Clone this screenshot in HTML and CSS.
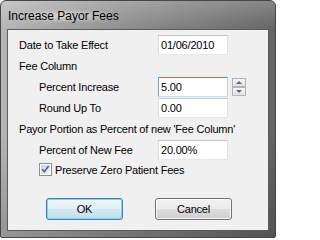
FILE: index.html
```html
<!DOCTYPE html>
<html>
<head>
<meta charset="utf-8">
<link rel="stylesheet" href="styles.css">
</head>
<body>
<div class="window">
  <div class="titlebar"><span class="title">Increase Payor Fees</span></div>
  <div class="client">
    <div class="row row-date">
      <span class="label">Date to Take Effect</span>
      <div class="field">01/06/2010</div>
    </div>
    <div class="heading heading-fee">Fee Column</div>
    <div class="row row-indent row-percent">
      <span class="label">Percent Increase</span>
      <div class="field field-focus">5.00</div>
      <svg class="spin" width="14" height="18" viewBox="0 0 14 18">
        <defs>
          <linearGradient id="sg" x1="0" y1="0" x2="0" y2="1">
            <stop offset="0" stop-color="#f6f6f6"/>
            <stop offset="1" stop-color="#e2e2e2"/>
          </linearGradient>
        </defs>
        <rect x="0.5" y="0.5" width="13" height="8" fill="url(#sg)" stroke="#b4b4b4"/>
        <rect x="0.5" y="9.5" width="13" height="8" fill="url(#sg)" stroke="#b4b4b4"/>
        <polygon points="4,6 10,6 7,3" fill="#4d6a99"/>
        <polygon points="4,12 10,12 7,15" fill="#4d6a99"/>
      </svg>
    </div>
    <div class="row row-indent row-round">
      <span class="label">Round Up To</span>
      <div class="field">0.00</div>
    </div>
    <div class="heading heading-payor">Payor Portion as Percent of new 'Fee Column'</div>
    <div class="row row-indent row-newfee">
      <span class="label">Percent of New Fee</span>
      <div class="field">20.00%</div>
    </div>
    <div class="check-row">
      <svg class="checkbox" width="13" height="13" viewBox="0 0 13 13">
        <defs>
          <linearGradient id="cg" x1="0" y1="0" x2="1" y2="1">
            <stop offset="0" stop-color="#cfd1d6"/>
            <stop offset="1" stop-color="#f4f4f4"/>
          </linearGradient>
        </defs>
        <rect x="0.5" y="0.5" width="12" height="12" fill="#ffffff" stroke="#8e8f8f"/>
        <rect x="2" y="2" width="9" height="9" fill="url(#cg)"/>
        <path d="M3.2 6.3 L5.3 8.8 L9.6 3" fill="none" stroke="#4a64a6" stroke-width="1.6"/>
      </svg>
      <span class="check-label">Preserve Zero Patient Fees</span>
    </div>
    <div class="buttons">
      <div class="btn btn-default">OK</div>
      <div class="btn">Cancel</div>
    </div>
  </div>
</div>
</body>
</html>
```

FILE: styles.css
```css
html, body {
  margin: 0;
  padding: 0;
  background: #ffffff;
}

.window {
  width: 276px;
  height: 238px;
  box-sizing: border-box;
  border: 1px solid #464646;
  border-radius: 6px 6px 2px 2px;
  background:
    linear-gradient(to bottom, rgba(255,255,255,0.22), rgba(255,255,255,0) 28px, rgba(0,0,0,0) 55%, rgba(0,0,0,0.18)),
    linear-gradient(to right, #b6b6b6, #8e8e8e 45%, #646464);
  display: flex;
  flex-direction: column;
  font-family: "Liberation Sans", Arial, sans-serif;
  color: #000;
}

.titlebar {
  height: 28px;
  flex: none;
  display: flex;
  align-items: center;
  padding-left: 7px;
  box-sizing: border-box;
  padding-top: 1px;
}

.title {
  font-size: 12px;
  line-height: 14px;
  padding: 0 4px 0 0;
  background: radial-gradient(ellipse at center, rgba(255,255,255,0.55), rgba(255,255,255,0) 70%);
}

.client {
  flex: 1;
  margin: 0 6px 6px 6px;
  border: 1px solid #5c5c5c;
  background: #f0f0f0;
  display: flex;
  flex-direction: column;
  font-size: 11px;
  line-height: 13px;
  letter-spacing: -0.2px;
  padding-top: 5px;
}

.row {
  display: flex;
  align-items: center;
  height: 20px;
  padding-left: 11px;
}

.row-indent {
  padding-left: 31px;
}

.label {
  width: 119px;
  flex: none;
}

.row-date .label {
  width: 139px;
}

.field {
  width: 70px;
  height: 20px;
  box-sizing: border-box;
  border: 1px solid;
  border-color: #c3c5c9 #dfe2e6 #e3e6ea #dadde1;
  border-radius: 1px;
  background: #ffffff;
  padding: 0 0 0 2px;
  line-height: 18px;
}

.field-focus {
  border-color: #5590c0 #b8d7ee #c5e0f3 #6ea4cf;
}

.spin {
  display: block;
  margin-left: 4px;
  margin-top: -1px;
}

.heading {
  padding-left: 11px;
  height: 13px;
}

.heading-fee {
  margin-top: 5px;
}

.row-percent {
  margin-top: 4px;
}

.row-round {
  margin-top: 1px;
}

.heading-payor {
  margin-top: 5px;
}

.row-newfee {
  margin-top: 4px;
}

.check-row {
  display: flex;
  align-items: center;
  height: 15px;
  margin-top: 2px;
  padding-left: 31px;
}

.checkbox {
  display: block;
  flex: none;
}

.check-label {
  margin-left: 3px;
  padding-top: 2px;
}

.buttons {
  display: flex;
  gap: 32px;
  padding-left: 38px;
  margin-top: 21px;
}

.btn {
  width: 77px;
  height: 22px;
  box-sizing: border-box;
  border: 1px solid #707070;
  border-radius: 3px;
  background: linear-gradient(to bottom, #f2f2f2 0%, #ebebeb 48%, #dddddd 52%, #cfcfcf 100%);
  box-shadow: inset 0 0 0 1px rgba(255,255,255,0.8);
  text-align: center;
  line-height: 20px;
}

.btn-default {
  border-color: #3c7fb1;
  background: linear-gradient(to bottom, #eef6fa 0%, #e4f0f7 48%, #d2e7f2 52%, #c3deec 100%);
  box-shadow: inset 0 0 0 1px #7fd6f5;
}
```
